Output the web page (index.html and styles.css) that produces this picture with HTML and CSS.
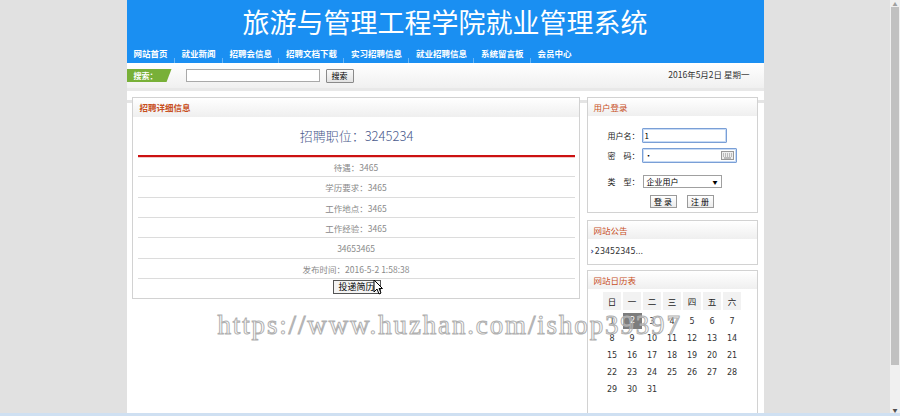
FILE: index.html
```html
<!DOCTYPE html>
<html lang="zh-CN">
<head>
<meta charset="utf-8">
<title>旅游与管理工程学院就业管理系统</title>
<link rel="stylesheet" href="styles.css">
</head>
<body>
<div class="screen">
  <div class="page">
    <div class="wrap">
      <header class="top">
        <h1 class="title">旅游与管理工程学院就业管理系统</h1>
        <nav class="nav">
          <a class="nav-item">网站首页</a>
          <a class="nav-item">就业新闻</a>
          <a class="nav-item">招聘会信息</a>
          <a class="nav-item">招聘文档下载</a>
          <a class="nav-item">实习招聘信息</a>
          <a class="nav-item">就业招聘信息</a>
          <a class="nav-item">系统留言板</a>
          <a class="nav-item last">会员中心</a>
        </nav>
      </header>
      <div class="searchbar">
        <span class="tag">搜索：</span>
        <span class="q"></span>
        <span class="sbtn">搜索</span>
        <span class="date">2016年5月2日 星期一</span>
      </div>
      <div class="sep"></div>
      <main class="content">
        <section class="box detail">
          <div class="box-hd">招聘详细信息</div>
          <div class="job-title">招聘职位：3245234</div>
          <div class="redline"></div>
          <ul class="rows">
            <li class="row">待遇：3465</li>
            <li class="row">学历要求：3465</li>
            <li class="row">工作地点：3465</li>
            <li class="row">工作经验：3465</li>
            <li class="row">34653465</li>
            <li class="row">发布时间：2016-5-2 1:58:38</li>
          </ul>
          <div class="apply">
            <span class="apply-btn">投递简历</span>
            <svg class="cursor" width="10" height="16" viewBox="0 0 10 16"><path d="M1 1 L1 13 L4 10 L6 15 L8 14 L6 9.5 L9.5 9.5 Z" fill="#fff" stroke="#000" stroke-width="1" stroke-linejoin="round"/></svg>
          </div>
        </section>
        <aside class="side">
          <section class="box login">
            <div class="box-hd">用户登录</div>
            <div class="form">
              <div class="frow r1"><span class="lbl">用户名：</span><span class="inp user">1</span></div>
              <div class="frow r2"><span class="lbl">密　码：</span><span class="inp pwd">•<svg class="kbd" width="13" height="9" viewBox="0 0 13 9"><rect x="0.5" y="0.5" width="12" height="8" fill="#eee" stroke="#999"/><path d="M2 3h1M4 3h1M6 3h1M8 3h1M10 3h1M2 5h1M4 5h1M6 5h1M8 5h1M10 5h1M3 7h7" stroke="#888" stroke-width="1"/></svg></span></div>
              <div class="frow r3"><span class="lbl">类　型：</span><span class="sel">企业用户<span class="caret">▼</span></span></div>
              <div class="btns"><span class="fbtn">登 录</span><span class="fbtn">注 册</span></div>
            </div>
          </section>
          <section class="box notice">
            <div class="box-hd">网站公告</div>
            <div class="notice-body"><span class="bullet">›</span>23452345...</div>
          </section>
          <section class="box cal">
            <div class="box-hd">网站日历表</div>
            <div class="cal-grid">
              <span class="wd">日</span><span class="wd">一</span><span class="wd">二</span><span class="wd">三</span><span class="wd">四</span><span class="wd">五</span><span class="wd">六</span>
              <span class="d">1</span><span class="d today">2</span><span class="d">3</span><span class="d">4</span><span class="d">5</span><span class="d">6</span><span class="d">7</span>
              <span class="d">8</span><span class="d">9</span><span class="d">10</span><span class="d">11</span><span class="d">12</span><span class="d">13</span><span class="d">14</span>
              <span class="d">15</span><span class="d">16</span><span class="d">17</span><span class="d">18</span><span class="d">19</span><span class="d">20</span><span class="d">21</span>
              <span class="d">22</span><span class="d">23</span><span class="d">24</span><span class="d">25</span><span class="d">26</span><span class="d">27</span><span class="d">28</span>
              <span class="d">29</span><span class="d">30</span><span class="d">31</span>
            </div>
          </section>
        </aside>
        <div class="watermark">https://www.huzhan.com/ishop39397</div>
      </main>
    </div>
  </div>
  <div class="scrollbar">
    <span class="sb-up">▲</span>
    <span class="sb-thumb"></span>
    <span class="sb-track"></span>
    <span class="sb-down">▼</span>
  </div>
</div>
<div class="taskbar"></div>
</body>
</html>
```
FILE: styles.css
```css
* { box-sizing: border-box; margin: 0; padding: 0; }
html, body { width: 900px; height: 416px; overflow: hidden; }
body {
  background: #e1e1e1;
  font-family: "Noto Sans CJK SC", "DejaVu Sans", sans-serif;
  color: #333;
}
.screen { display: flex; height: 413px; }
.page { width: 890px; height: 413px; background: #e1e1e1; overflow: hidden; }
.wrap { width: 637px; margin: 0 auto; height: 413px; display: flex; flex-direction: column; }

.top { flex-shrink: 0; background: #1a8ff2; height: 63px; color: #fff; }
.title {
  height: 44px; line-height: 44px; text-align: center;
  font-size: 27px; font-weight: 400; letter-spacing: 0;
  color: #fff;
}
.nav { height: 19px; display: flex; align-items: center; padding-left: 0; }
.nav-item {
  position: relative;
  font-size: 8.5px; font-weight: 700; color: #fff;
  padding: 0 7px; line-height: 19px; white-space: nowrap;
}
.nav-item::after {
  content: ""; position: absolute; right: 0; bottom: 0;
  width: 1px; height: 5px; background: rgba(255,255,255,0.35);
}
.nav-item.last::after { display: none; }

.searchbar {
  flex-shrink: 0;
  height: 25px; display: flex; align-items: center;
  background: linear-gradient(#ffffff, #f0f0f0);
  font-size: 8.5px;
}
.tag {
  width: 45px; height: 13px; line-height: 13px;
  background: #78b038; color: #fff; font-weight: 700;
  padding-left: 7px; font-size: 8px;
  clip-path: polygon(0 0, 100% 0, 89% 100%, 0 100%);
}
.q {
  margin-left: 14px; width: 134px; height: 13px;
  background: #fff; border: 1px solid #a9a9a9;
}
.sbtn {
  margin-left: 6px; width: 28px; height: 14px; line-height: 12px;
  border: 1px solid #8a8a8a; border-radius: 1px;
  background: linear-gradient(#fafafa, #e3e3e3);
  text-align: center; font-size: 8px; color: #000;
}
.date { margin-left: auto; margin-right: 14px; color: #333; font-size: 8.5px; margin-top: -4px; }

.sep { flex-shrink: 0; height: 3px; background: #e8e8e8; }

.content {
  position: relative;
  flex: 1; min-height: 0; overflow: hidden;
  background: linear-gradient(#fff 9px, #e4e4e4 9px, #e4e4e4 12px, #fff 12px);
  padding: 6px 6px 0 5px;
  display: flex; gap: 7px; align-items: flex-start;
}
.box { border: 1px solid #d2d2d2; background: #fff; flex-shrink: 0; }
.box-hd {
  height: 18px; line-height: 18px;
  background: linear-gradient(#ffffff, #efefef);
  color: #c8501e; font-size: 8.5px; padding-left: 6px;
}

.detail { width: 448px; height: 202px; }
.detail .box-hd { height: 19px; line-height: 19px; padding-left: 7px; font-weight: 700; }
.job-title {
  height: 38px; line-height: 38px; text-align: center;
  font-size: 13px; color: #4a5a8c; padding-left: 2px; font-weight: 300;
}
.redline { height: 2px; background: #cc1111; margin: 0 4px 0 5px; box-shadow: 0 1px 0 #f3c9c9; }
.rows { list-style: none; margin: 0 4px 0 5px; }
.row {
  height: 20.33px; line-height: 20px; text-align: center;
  border-bottom: 1px solid #dcdcdc;
  font-size: 8.5px; color: #8a8a8a;
}
.apply { position: relative; display: flex; justify-content: center; padding-top: 1px; padding-left: 2px; }
.apply-btn {
  width: 48px; height: 14px; line-height: 12px; text-align: center;
  border: 1px solid #555; background: #f4f4f4;
  font-size: 9px; color: #000;
}
.cursor { position: absolute; left: 240px; top: 0; }

.side { width: 171px; flex-shrink: 0; display: flex; flex-direction: column; }
.login { height: 116px; }
.form { padding: 12px 0 0 19px; }
.frow { display: flex; align-items: center; }
.lbl { width: 33px; text-align: right; font-size: 8px; color: #222; white-space: nowrap; margin-right: 2px; }
.inp {
  position: relative; height: 15px; line-height: 13px;
  border: 1px solid #7a9fd6; border-radius: 1px; background: #fff;
  font-size: 8px; padding-left: 2px; color: #000;
  box-shadow: inset 0 0 0 1px #c8dbf5;
}
.user { width: 85px; }
.pwd { width: 95px; }
.r2 { margin-top: 5px; }
.kbd { position: absolute; right: 2px; top: 2px; }
.r3 { margin-top: 12px; }
.r3 .lbl { margin-right: 3px; }
.sel {
  width: 79px; height: 13px; line-height: 11px;
  border: 1px solid #a0a0a0; background: #fff;
  font-size: 8px; color: #000; padding-left: 3px;
  display: flex; justify-content: space-between;
}
.caret { font-size: 5px; padding-right: 3px; line-height: 11px; }
.btns { display: flex; gap: 10px; margin-top: 7px; padding-left: 43px; }
.fbtn {
  width: 27px; height: 13px; line-height: 11px; text-align: center;
  border: 1px solid #9a9a9a; background: linear-gradient(#fff, #ececec);
  font-size: 8px; color: #000;
}

.notice { margin-top: 7px; height: 45px; }
.notice-body { font-family: "DejaVu Sans", sans-serif; font-size: 8px; color: #333; padding: 6px 0 0 3px; line-height: 14px; }
.bullet { color: #2a3f8a; font-weight: 700; margin-right: 1px; }

.cal { margin-top: 5px; height: 150px; }
.cal-grid {
  width: 140px; margin: 3px auto 0;
  display: grid; grid-template-columns: repeat(7, 20px);
  grid-template-rows: 21px; grid-auto-rows: 17px;
  font-family: "DejaVu Sans", sans-serif; font-size: 8px; color: #333;
}
.wd {
  height: 18px; line-height: 18px; text-align: center;
  background: #f2f2f2; margin: 0 1px 3px;
  font-family: "Noto Sans CJK SC", sans-serif; font-size: 8.5px; color: #222;
}
.d { text-align: center; line-height: 17px; }
.today { background: #7d7d7d; color: #fff; margin: 0 0 1px 1px; line-height: 16px; }

.watermark {
  position: absolute; left: 91px; top: 219px;
  font-family: "Liberation Serif", serif; font-size: 27px;
  color: rgba(255,255,255,0.25);
  -webkit-text-stroke: 1px #b0b0b0;
  letter-spacing: 1.85px;
  white-space: nowrap; pointer-events: none;
}

.scrollbar {
  width: 10px; height: 413px; background: #f0f0f0;
  display: flex; flex-direction: column; align-items: center;
}
.sb-up, .sb-down { height: 7px; font-size: 5px; line-height: 7px; color: #a0a0a0; }
.sb-down { color: #505050; }
.sb-thumb { width: 8px; height: 358px; background: #c1c1c1; }
.sb-track { flex: 1; }
.taskbar { height: 3px; background: #cfe0f2; }
```
